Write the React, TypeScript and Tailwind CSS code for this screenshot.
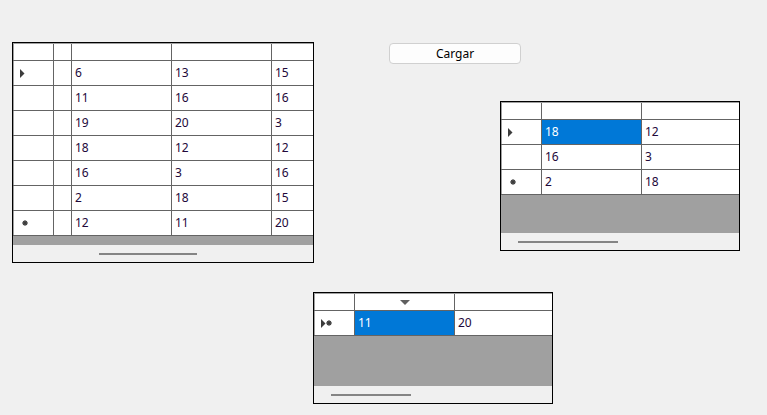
type Cell = { text: string; selected?: boolean };

type GridProps = {
  width: string;
  cols: string[];
  header?: (i: number) => React.ReactNode;
  rows: { marker?: "current" | "new" | "currentNew"; cells: Cell[] }[];
  grayH: string;
  thumb: string;
};

const font = { fontFamily: '"Noto Sans", "Open Sans", Arial, sans-serif' };

const Arrow = () => (
  <svg width="5" height="9" viewBox="0 0 5 9" className="shrink-0">
    <path d="M0 0 L4.5 4.5 L0 9 Z" fill="#3c3c3c" />
  </svg>
);

const Star = () => (
  <svg width="6" height="6" viewBox="0 0 6 6" className="shrink-0">
    <circle cx="3" cy="3" r="2.5" fill="#555555" />
    <path d="M3 0.2 V5.8 M0.2 3 H5.8 M1 1 L5 5 M5 1 L1 5" stroke="#3a3a3a" strokeWidth="0.7" />
  </svg>
);

const SortDown = () => (
  <svg width="10" height="5" viewBox="0 0 10 5">
    <path d="M0 0 H10 L5 5 Z" fill="#5f5f5f" />
  </svg>
);

function RowHeader({ marker }: { marker?: "current" | "new" | "currentNew" }) {
  return (
    <div className="w-[41px] shrink-0 h-full bg-white border-l border-l-[#a0a0a0] border-r border-r-[#646464] flex items-center">
      {marker === "current" && (
        <span className="pl-[6px] flex">
          <Arrow />
        </span>
      )}
      {marker === "new" && (
        <span className="pl-[8px] flex">
          <Star />
        </span>
      )}
      {marker === "currentNew" && (
        <span className="pl-[6px] flex items-center">
          <Arrow />
          <Star />
        </span>
      )}
    </div>
  );
}

function DataGrid({ width, cols, header, rows, grayH, thumb }: GridProps) {
  return (
    <div className={`${width} border border-black bg-[#f0f0f0] flex flex-col overflow-hidden`}>
      <div className="h-[18px] flex border-t border-t-[#a0a0a0] border-b border-b-[#646464] bg-white">
        <div className="w-[41px] shrink-0 border-l border-l-[#a0a0a0] border-r border-r-[#646464]" />
        {cols.map((c, i) => (
          <div key={i} className={`${c} shrink-0 border-r border-r-[#646464] flex items-center justify-center`}>
            {header?.(i)}
          </div>
        ))}
        <div className="flex-1" />
      </div>
      {rows.map((r, ri) => (
        <div key={ri} className="h-[25px] flex border-b border-b-[#646464] bg-white">
          <RowHeader marker={r.marker} />
          {r.cells.map((c, ci) => {
            const last = ci === r.cells.length - 1;
            return (
              <div
                key={ci}
                className={`${last ? "flex-1" : `${cols[ci]} shrink-0 border-r border-r-[#646464]`} h-full flex items-center pl-[3px] text-[12px] ${
                  c.selected ? "bg-[#0078d7] text-white" : "text-[#22083a]"
                }`}
                style={font}
              >
                {c.text}
              </div>
            );
          })}
        </div>
      ))}
      <div className={`${grayH} bg-[#a0a0a0]`} />
      <div className="h-[17px] bg-[#f0f0f0] pt-[8px]">
        <div className={`${thumb} h-[2px] bg-[#858585]`} />
      </div>
    </div>
  );
}

const grid1Rows = [
  ["6", "13", "15"],
  ["11", "16", "16"],
  ["19", "20", "3"],
  ["18", "12", "12"],
  ["16", "3", "16"],
  ["2", "18", "15"],
  ["12", "11", "20"],
];

export default function App() {
  return (
    <div className="w-[767px] h-[415px] bg-[#f0f0f0] overflow-hidden flex flex-col" style={font}>
      <div className="flex items-start">
        <div className="ml-[12px] mt-[42px]">
          <DataGrid
            width="w-[302px]"
            cols={["w-[18px]", "w-[100px]", "w-[100px]"]}
            rows={grid1Rows.map((r, i) => ({
              marker: i === 0 ? "current" : i === grid1Rows.length - 1 ? "new" : undefined,
              cells: [{ text: "" }, ...r.map((t) => ({ text: t }))],
            }))}
            grayH="h-[9px]"
            thumb="ml-[86px] w-[98px]"
          />
        </div>
        <div className="ml-[75px] mt-[43px] flex flex-col items-start">
          <button className="w-[132px] h-[21px] rounded-[4px] border border-[#d0d0d0] bg-[#fdfdfd] text-[12px] text-black flex items-center justify-center">
            Cargar
          </button>
          <div className="ml-[111px] mt-[37px]">
            <DataGrid
              width="w-[240px]"
              cols={["w-[100px]"]}
              rows={[
                { marker: "current", cells: [{ text: "18", selected: true }, { text: "12" }] },
                { cells: [{ text: "16" }, { text: "3" }] },
                { marker: "new", cells: [{ text: "2" }, { text: "18" }] },
              ]}
              grayH="h-[38px]"
              thumb="ml-[17px] w-[100px]"
            />
          </div>
        </div>
      </div>
      <div className="ml-[313px] mt-[29px]">
        <DataGrid
          width="w-[240px]"
          cols={["w-[100px]"]}
          header={(i) => (i === 0 ? <SortDown /> : null)}
          rows={[{ marker: "currentNew", cells: [{ text: "11", selected: true }, { text: "20" }] }]}
          grayH="h-[50px]"
          thumb="ml-[17px] w-[80px]"
        />
      </div>
    </div>
  );
}
